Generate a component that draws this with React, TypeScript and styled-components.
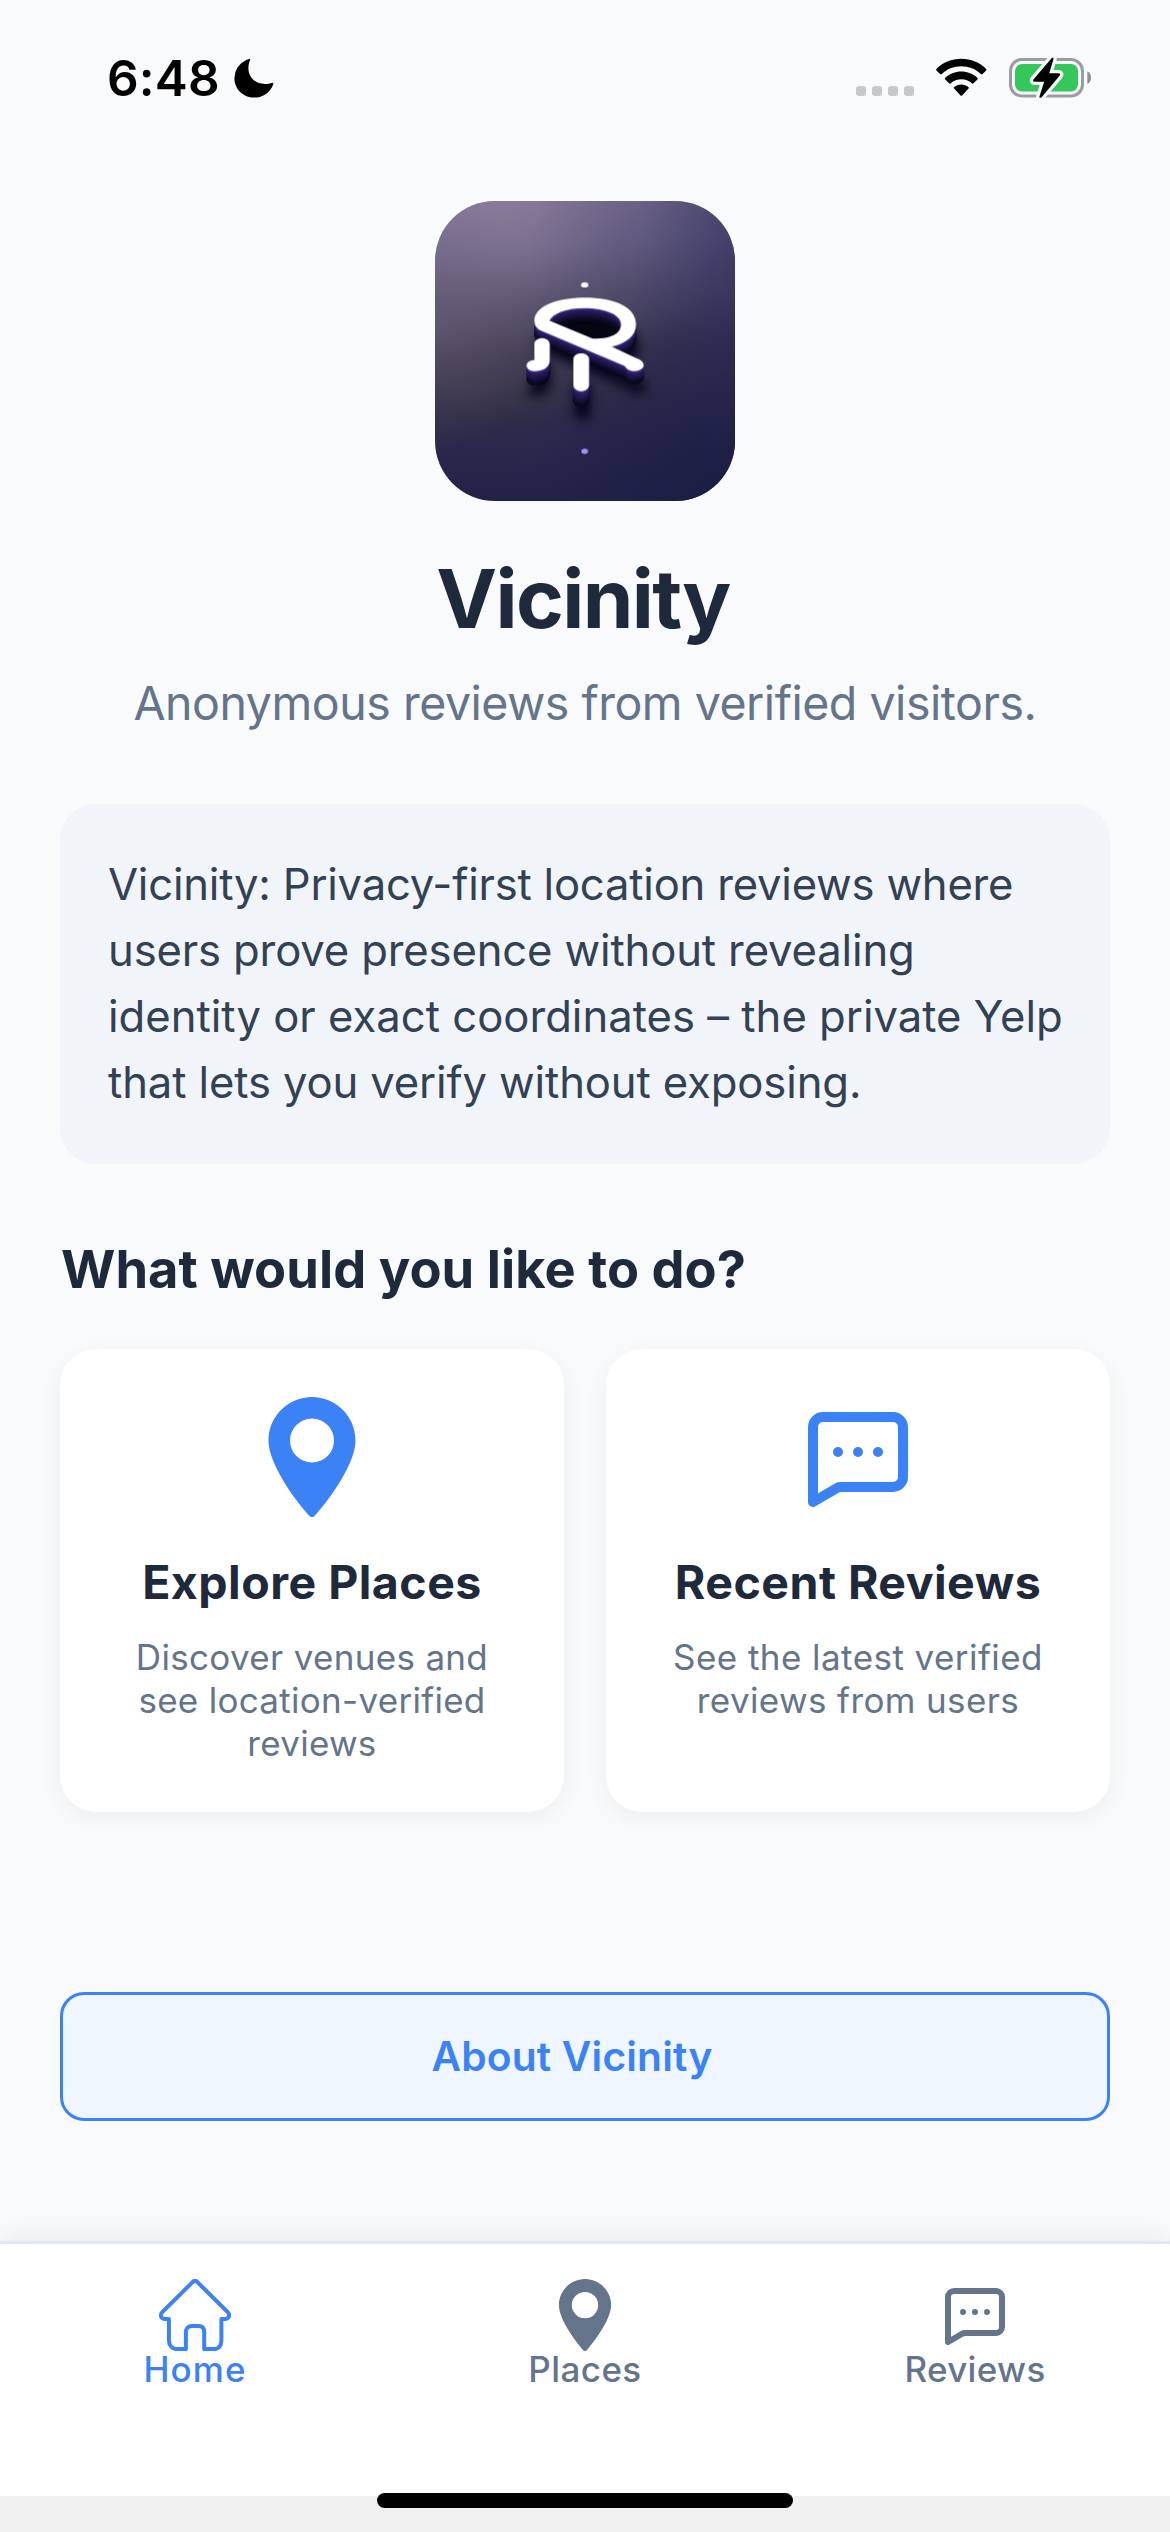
import React from "react";
import styled, { createGlobalStyle } from "styled-components";

const blue = "#3b82f6";
const slate = "#64748b";
const ink = "#1e293b";

const GlobalStyle = createGlobalStyle`
  *, *::before, *::after { box-sizing: border-box; }
  html, body { margin: 0; background: #f2f2f2; }
  body {
    font-family: Inter, "Liberation Sans", sans-serif;
    -webkit-font-smoothing: antialiased;
  }
  h1, h2, h3, p { margin: 0; }
  svg { display: block; }
`;

const Screen = styled.div`
  position: relative;
  display: flex;
  flex-direction: column;
  width: 1170px;
  height: 2532px;
  overflow: hidden;
  background: #f9fafc;
`;

const StatusBar = styled.header`
  display: flex;
  justify-content: space-between;
  height: 141px;
  padding: 58px 78px 0 107px;
`;

const StatusGroup = styled.div`
  display: flex;
  align-items: flex-start;
`;

const Clock = styled.span`
  width: 127px;
  font-size: 49.5px;
  font-weight: 600;
  line-height: 40px;
  letter-spacing: 0.2px;
  color: #000;
`;

const SignalDots = styled.div`
  display: flex;
  gap: 6px;
  margin: 28px 22px 0 0;
`;

const SignalDot = styled.i`
  width: 10px;
  height: 10px;
  border-radius: 3px;
  background: #c8c9cb;
`;

const BatterySlot = styled.div`
  margin: -1px 0 0 22px;
`;

const Content = styled.main`
  display: flex;
  flex-direction: column;
  padding: 60px 60px 0;
`;

const Hero = styled.section`
  display: flex;
  flex-direction: column;
  align-items: center;
`;

const AppIcon = styled.div`
  width: 300px;
  height: 300px;
  border-radius: 60px;
  overflow: hidden;
`;

const Title = styled.h1`
  margin-top: 48px;
  padding-right: 4px;
  font-size: 81.5px;
  font-weight: 700;
  line-height: 100px;
  letter-spacing: -1.63px;
  color: ${ink};
`;

const Tagline = styled.p`
  margin-top: 25px;
  font-size: 46.5px;
  line-height: 58px;
  letter-spacing: -0.47px;
  white-space: nowrap;
  color: ${slate};
`;

const Description = styled.p`
  margin-top: 72px;
  padding: 48px 46px 48px 48px;
  border-radius: 36px;
  background: #f1f4f9;
  font-size: 43.6px;
  line-height: 66px;
  color: #334155;
`;

const Line = styled.span<{ $tracking: number }>`
  display: block;
  white-space: nowrap;
  letter-spacing: ${(p) => p.$tracking}px;
`;

const SectionTitle = styled.h2`
  margin-top: 73px;
  padding-left: 1px;
  font-size: 52.4px;
  font-weight: 700;
  line-height: 64px;
  letter-spacing: 0.05px;
  color: ${ink};
`;

const CardRow = styled.div`
  display: grid;
  grid-template-columns: 1fr 1fr;
  gap: 42px;
  margin-top: 48px;
`;

const Card = styled.article`
  display: flex;
  flex-direction: column;
  align-items: center;
  height: 463px;
  padding-top: 48px;
  border-radius: 36px;
  background: #fff;
  box-shadow: 0 6px 24px rgba(0, 0, 0, 0.05);
  text-align: center;
`;

const CardIcon = styled.div`
  color: ${blue};
`;

const CardTitle = styled.h3`
  margin-top: 36px;
  font-size: 46.5px;
  font-weight: 700;
  line-height: 58px;
  letter-spacing: 0.48px;
  color: ${ink};
`;

const CardText = styled.p`
  margin-top: 25px;
  font-size: 35px;
  line-height: 43px;
  color: ${slate};
`;

const AboutButton = styled.button`
  height: 129px;
  margin-top: 180px;
  padding: 0 26px 0 0;
  border: 3px solid ${blue};
  border-radius: 24px;
  background: #eff6ff;
  font: 600 40.7px/50px Inter, "Liberation Sans", sans-serif;
  letter-spacing: 0.18px;
  color: ${blue};
`;

const TabBar = styled.nav`
  display: grid;
  grid-template-columns: repeat(3, 1fr);
  height: 255px;
  margin-top: auto;
  padding-top: 35px;
  border-top: 3px solid #e2e8f0;
  background: #fff;
  box-shadow: 0 -6px 24px rgba(0, 0, 0, 0.06);
`;

const Tab = styled.div<{ $active?: boolean; $tracking: number }>`
  display: flex;
  flex-direction: column;
  align-items: center;
  font-size: 35px;
  font-weight: 500;
  line-height: 37px;
  letter-spacing: ${(p) => p.$tracking}px;
  color: ${(p) => (p.$active ? blue : slate)};
`;

const SafeArea = styled.footer`
  height: 36px;
  background: #f1f1f1;
`;

const HomeIndicator = styled.div`
  position: absolute;
  left: 377px;
  bottom: 24px;
  width: 416px;
  height: 15px;
  border-radius: 8px;
  background: #000;
`;

const MoonIcon = () => (
  <svg width="40" height="40" viewBox="0 0 40 40">
    <path
      d="M15.2 0.9C14.2 1.2 13.2 1.6 12.2 2A20 20 0 0 0 0.4 20.2C0.4 31 9.2 39.6 20.3 39.6C29 39.6 36.4 34.2 39.2 26.4C39.7 25 38.9 24.4 37.6 24.9C35.4 25.6 33.4 25.9 31 25.9C20.8 25.9 14.4 19 14.4 10C14.4 7.4 14.9 4.8 15.9 2.4C16.3 1.3 16.1 0.7 15.2 0.9Z"
      fill="#000"
    />
  </svg>
);

const WifiIcon = () => (
  <svg width="51" height="40" viewBox="0 0 51 40" fill="#000">
    <path d="M25.3 0.7C35 0.7 43.8 4.4 50 10.7C50.6 11.3 50.6 11.8 50.1 12.4L46.6 15.9C46 16.5 45.4 16.5 44.8 15.9C39.7 11 32.9 8.2 25.3 8.2C17.7 8.2 10.9 11 5.8 15.9C5.2 16.5 4.6 16.5 4 15.9L0.5 12.4C0 11.8 0 11.3 0.6 10.7C6.8 4.4 15.6 0.7 25.3 0.7Z" />
    <path d="M25.3 13.6C31.4 13.6 37.1 16 41.3 19.8C41.9 20.4 41.9 21 41.4 21.5L37.5 25.3C37 25.8 36.4 25.8 35.8 25.3C33 22.8 29.3 21.3 25.3 21.3C21.3 21.3 17.6 22.8 14.8 25.3C14.2 25.8 13.6 25.8 13.1 25.3L9.2 21.5C8.7 21 8.7 20.4 9.3 19.8C13.5 16 19.2 13.6 25.3 13.6Z" />
    <path d="M25.3 26.4C28 26.4 30.5 27.4 32.4 28.9C33 29.4 33 30 32.5 30.5L26.3 37.3C25.6 38 25 38 24.3 37.3L18.1 30.5C17.6 30 17.6 29.4 18.2 28.9C20.1 27.4 22.6 26.4 25.3 26.4Z" />
  </svg>
);

const boltShape =
  "M42.6 0.2C43.8 -0.6 44.8 0 44.4 1.4L40.2 15.2H49.6C51.2 15.2 51.6 16.6 50.6 17.8L32.6 39.2C31.4 40.4 30 39.8 30.5 38.2L35.2 23.8H25.6C24 23.8 23.6 22.4 24.6 21.2Z";

const BatteryIcon = () => (
  <svg width="83" height="42" viewBox="0 -1 83 42">
    <rect x="1.5" y="1.5" width="72" height="36.5" rx="11.5" fill="none" stroke="#9b9ca0" strokeWidth="3" />
    <rect x="6" y="6" width="63" height="27.5" rx="7" fill="#34c759" />
    <path d="M78.3 13.5C80.6 14.2 82 16.8 82 19.7C82 22.6 80.6 25.2 78.3 25.9Z" fill="#8c8d91" />
    <path d={boltShape} fill="#f9fafc" stroke="#f9fafc" strokeWidth="6.5" strokeLinejoin="round" />
    <path d={boltShape} fill="#000" />
  </svg>
);

const loopShape =
  "M343 392C343 350 410 323 493 323C585 323 648 352 648 403C648 435 622 458 575 470L650 505C672 512 678 530 662 538C650 545 630 545 620 535C617 530 612 526 605 524L360 420C350 415 343 405 343 392ZM388 392C400 368 440 354 493 354C560 354 603 375 603 403C603 432 570 447 518 446Z";
const hookShape =
  "M343 463C343 438 389 438 389 463V510C389 533 366 543 345 543C328 543 319 535 320 525C321 515 332 510 343 510Z";
const legShape = "M460 507C460 484 507 484 507 507V584C507 610 460 610 460 584Z";

const depthColors = ["#080a1c", "#0c0b24", "#120e30", "#18123d", "#1e1648", "#241a54", "#2a1e61", "#32256f"];

const BrandMark = () => (
  <svg width="300" height="300" viewBox="45 33 900 900">
    <defs>
      <linearGradient id="base" x1="0.42" y1="0" x2="0.5" y2="1">
        <stop offset="0" stopColor="#7d7192" />
        <stop offset="0.15" stopColor="#6f6687" />
        <stop offset="0.32" stopColor="#544d68" />
        <stop offset="0.5" stopColor="#3a3549" />
        <stop offset="0.65" stopColor="#312e45" />
        <stop offset="0.8" stopColor="#29284b" />
        <stop offset="1" stopColor="#212148" />
      </linearGradient>
      <radialGradient id="glow" cx="0.22" cy="0" r="0.75">
        <stop offset="0" stopColor="#9583a0" stopOpacity="0.5" />
        <stop offset="0.5" stopColor="#8b7c9c" stopOpacity="0.16" />
        <stop offset="1" stopColor="#857797" stopOpacity="0" />
      </radialGradient>
      <linearGradient id="side" x1="0.3" y1="0.3" x2="1" y2="0.38">
        <stop offset="0" stopColor="#30305f" stopOpacity="0" />
        <stop offset="0.5" stopColor="#30305f" stopOpacity="0.25" />
        <stop offset="1" stopColor="#30305f" stopOpacity="0.75" />
      </linearGradient>
      <radialGradient id="edge" cx="0" cy="0.42" r="0.4">
        <stop offset="0" stopColor="#6c627c" stopOpacity="0.45" />
        <stop offset="1" stopColor="#6c627c" stopOpacity="0" />
      </radialGradient>
      <radialGradient id="corner" cx="1" cy="1" r="0.7">
        <stop offset="0" stopColor="#141538" stopOpacity="0.75" />
        <stop offset="1" stopColor="#141538" stopOpacity="0" />
      </radialGradient>
      <filter id="soft" x="-30%" y="-30%" width="160%" height="180%">
        <feGaussianBlur stdDeviation="16" />
      </filter>
    </defs>
    <rect x="45" y="33" width="900" height="900" fill="url(#base)" />
    <rect x="45" y="33" width="900" height="900" fill="url(#glow)" />
    <rect x="45" y="33" width="900" height="900" fill="url(#side)" />
    <rect x="45" y="33" width="900" height="900" fill="url(#edge)" />
    <rect x="45" y="33" width="900" height="900" fill="url(#corner)" />
    <g filter="url(#soft)" fill="#05061a">
      <path d={loopShape} transform="translate(8 66)" opacity="0.9" />
      <path d={hookShape} transform="translate(2 74)" opacity="0.9" />
      <path d={legShape} transform="translate(4 86)" opacity="0.95" />
    </g>
    <ellipse cx="500" cy="402" rx="112" ry="50" fill="#050614" />
    {depthColors.map((color, i) => {
      const step = depthColors.length - i;
      return (
        <g key={color} fill={color} fillRule="evenodd">
          <path d={loopShape} transform={`translate(0 ${step * 5})`} />
          <path d={hookShape} transform={`translate(0 ${step * 5.5})`} />
          <path d={legShape} transform={`translate(0 ${step * 6})`} />
        </g>
      );
    })}
    <g fill="#4f3d9c" fillRule="evenodd" transform="translate(0 3)">
      <path d={loopShape} />
      <path d={hookShape} />
      <path d={legShape} />
    </g>
    <g fill="#fff" fillRule="evenodd">
      <path d={loopShape} />
      <path d={hookShape} />
      <path d={legShape} />
    </g>
    <ellipse cx="494" cy="288" rx="11" ry="9" fill="#3d3560" />
    <ellipse cx="494" cy="285" rx="11" ry="8" fill="#fff" />
    <ellipse cx="494" cy="787" rx="10" ry="8" fill="#17163c" />
    <ellipse cx="494" cy="784" rx="10" ry="8" fill="#9d94f5" />
  </svg>
);

const PinIcon = ({ size }: { size: number }) => (
  <svg width={size} height={size} viewBox="0 0 120 120" fill="currentColor" fillRule="evenodd">
    <path d="M60 0C36 0 16.5 19.5 16.5 43.5C16.5 62 34 92 56 117.4C58.8 120.8 61.2 120.8 64 117.4C86 92 103.5 62 103.5 43.5C103.5 19.5 84 0 60 0ZM60 21.5A22 22 0 1 1 60 65.5A22 22 0 1 1 60 21.5Z" />
  </svg>
);

const BubbleIcon = ({ size }: { size: number }) => (
  <svg width={size} height={size} viewBox="0 0 24 24">
    <path
      d="M5 4H19A2 2 0 0 1 21 6V16A2 2 0 0 1 19 18H8.5Q8.2 18 7.9 18.15L3 21V6A2 2 0 0 1 5 4Z"
      fill="none"
      stroke="currentColor"
      strokeWidth="2"
      strokeLinejoin="round"
    />
    <g fill="currentColor">
      <circle cx="8" cy="11" r="1" />
      <circle cx="12" cy="11" r="1" />
      <circle cx="16" cy="11" r="1" />
    </g>
  </svg>
);

const HomeIcon = () => (
  <svg width="72" height="72" viewBox="0 0 72 72">
    <path
      d="M33.8 2.9L3.5 32.9C0.2 36.4 2.4 40 6 40H9.9V61.2C9.9 66.6 13.4 70.1 18 70.1H26.9V53.2C26.9 49.2 29.3 46.9 33 46.9H39.4C43 46.9 45.2 49.2 45.2 53.2V70.1H55C59.6 70.1 62.4 66.6 62.4 61.2V40H66C69.6 40 71.8 36.4 68.5 32.9L38.2 2.9C36.8 1.5 35.2 1.5 33.8 2.9Z"
      fill="none"
      stroke="currentColor"
      strokeWidth="4"
      strokeLinejoin="round"
    />
  </svg>
);

export default function App() {
  return (
    <>
      <GlobalStyle />
      <Screen>
        <StatusBar>
          <StatusGroup>
            <Clock>6:48</Clock>
            <MoonIcon />
          </StatusGroup>
          <StatusGroup>
            <SignalDots>
              <SignalDot />
              <SignalDot />
              <SignalDot />
              <SignalDot />
            </SignalDots>
            <WifiIcon />
            <BatterySlot>
              <BatteryIcon />
            </BatterySlot>
          </StatusGroup>
        </StatusBar>
        <Content>
          <Hero>
            <AppIcon>
              <BrandMark />
            </AppIcon>
            <Title>Vicinity</Title>
            <Tagline>Anonymous reviews from verified visitors.</Tagline>
          </Hero>
          <Description>
            <Line $tracking={-0.21}>Vicinity: Privacy-first location reviews where</Line>
            <Line $tracking={-0.14}>users prove presence without revealing</Line>
            <Line $tracking={0.01}>identity or exact coordinates – the private Yelp</Line>
            <Line $tracking={-0.12}>that lets you verify without exposing.</Line>
          </Description>
          <SectionTitle>What would you like to do?</SectionTitle>
          <CardRow>
            <Card>
              <CardIcon>
                <PinIcon size={120} />
              </CardIcon>
              <CardTitle>Explore Places</CardTitle>
              <CardText>
                <Line $tracking={0.32}>Discover venues and</Line>
                <Line $tracking={0.29}>see location-verified</Line>
                <Line $tracking={0.27}>reviews</Line>
              </CardText>
            </Card>
            <Card>
              <CardIcon>
                <BubbleIcon size={120} />
              </CardIcon>
              <CardTitle>Recent Reviews</CardTitle>
              <CardText>
                <Line $tracking={0.44}>See the latest verified</Line>
                <Line $tracking={0.38}>reviews from users</Line>
              </CardText>
            </Card>
          </CardRow>
          <AboutButton>About Vicinity</AboutButton>
        </Content>
        <TabBar>
          <Tab $active $tracking={1.1}>
            <HomeIcon />
            Home
          </Tab>
          <Tab $tracking={0.42}>
            <PinIcon size={72} />
            Places
          </Tab>
          <Tab $tracking={0.33}>
            <BubbleIcon size={72} />
            Reviews
          </Tab>
        </TabBar>
        <SafeArea />
        <HomeIndicator />
      </Screen>
    </>
  );
}
